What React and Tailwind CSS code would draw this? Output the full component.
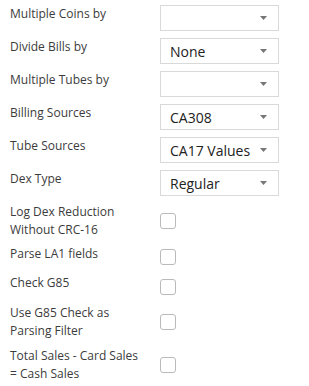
import React from 'react';

const selectRows = [
    { label: 'Multiple Coins by', value: '' },
    { label: 'Divide Bills by', value: 'None' },
    { label: 'Multiple Tubes by', value: '' },
    { label: 'Billing Sources', value: 'CA308' },
    { label: 'Tube Sources', value: 'CA17 Values' },
    { label: 'Dex Type', value: 'Regular' },
];

const Caret = () => (
    <svg className="w-[7px] h-[4px] text-[#767676]" viewBox="0 0 7 4" fill="currentColor">
        <path d="M0 0h7L3.5 4z" />
    </svg>
);

const SelectBox = ({ value }) => (
    <div className="w-[119px] h-[26px] border border-[#d9d9d9] bg-white flex items-center justify-between pl-[9px] pr-[11px]">
        <span className="text-[14px] text-[#222] leading-none pt-[2px]">{value}</span>
        <Caret />
    </div>
);

const Check = () => (
    <div className="w-[16px] h-[16px] rounded-[3px] border border-[#bababa] bg-white" />
);

const App = () => {
    return (
        <div className="w-[309px] h-[386px] bg-white overflow-hidden pt-[5px] font-['Open_Sans',sans-serif] antialiased">
            {/* Select rows */}
            {selectRows.map((row) => (
                <div key={row.label} className="flex h-[26px] mb-[7px]">
                    <div className="w-[160px] pl-[10px] text-[12px] leading-[18px] text-[#3c3c3c]">{row.label}</div>
                    <SelectBox value={row.value} />
                </div>
            ))}

            {/* Checkbox rows */}
            <div className="flex items-center h-[36px]">
                <div className="w-[160px] pl-[10px] pr-[14px] text-[12px] leading-[18px] text-[#3c3c3c]">Log Dex Reduction Without CRC-16</div>
                <Check />
            </div>
            <div className="flex items-center h-[26px] mt-[5px]">
                <div className="w-[160px] pl-[10px] pr-[14px] text-[12px] leading-[18px] text-[#3c3c3c] self-start pt-[1px]">Parse LA1 fields</div>
                <Check />
            </div>
            <div className="flex items-center h-[26px] mt-[4px]">
                <div className="w-[160px] pl-[10px] pr-[14px] text-[12px] leading-[18px] text-[#3c3c3c] self-start">Check G85</div>
                <Check />
            </div>
            <div className="flex items-center h-[36px] mt-[4px]">
                <div className="w-[160px] pl-[10px] pr-[14px] text-[12px] leading-[18px] text-[#3c3c3c]">Use G85 Check as Parsing Filter</div>
                <Check />
            </div>
            <div className="flex items-center h-[36px] mt-[7px]">
                <div className="w-[160px] pl-[10px] pr-[14px] text-[12px] leading-[18px] text-[#3c3c3c]">Total Sales - Card Sales = Cash Sales</div>
                <Check />
            </div>
        </div>
    );
};

export default App;
